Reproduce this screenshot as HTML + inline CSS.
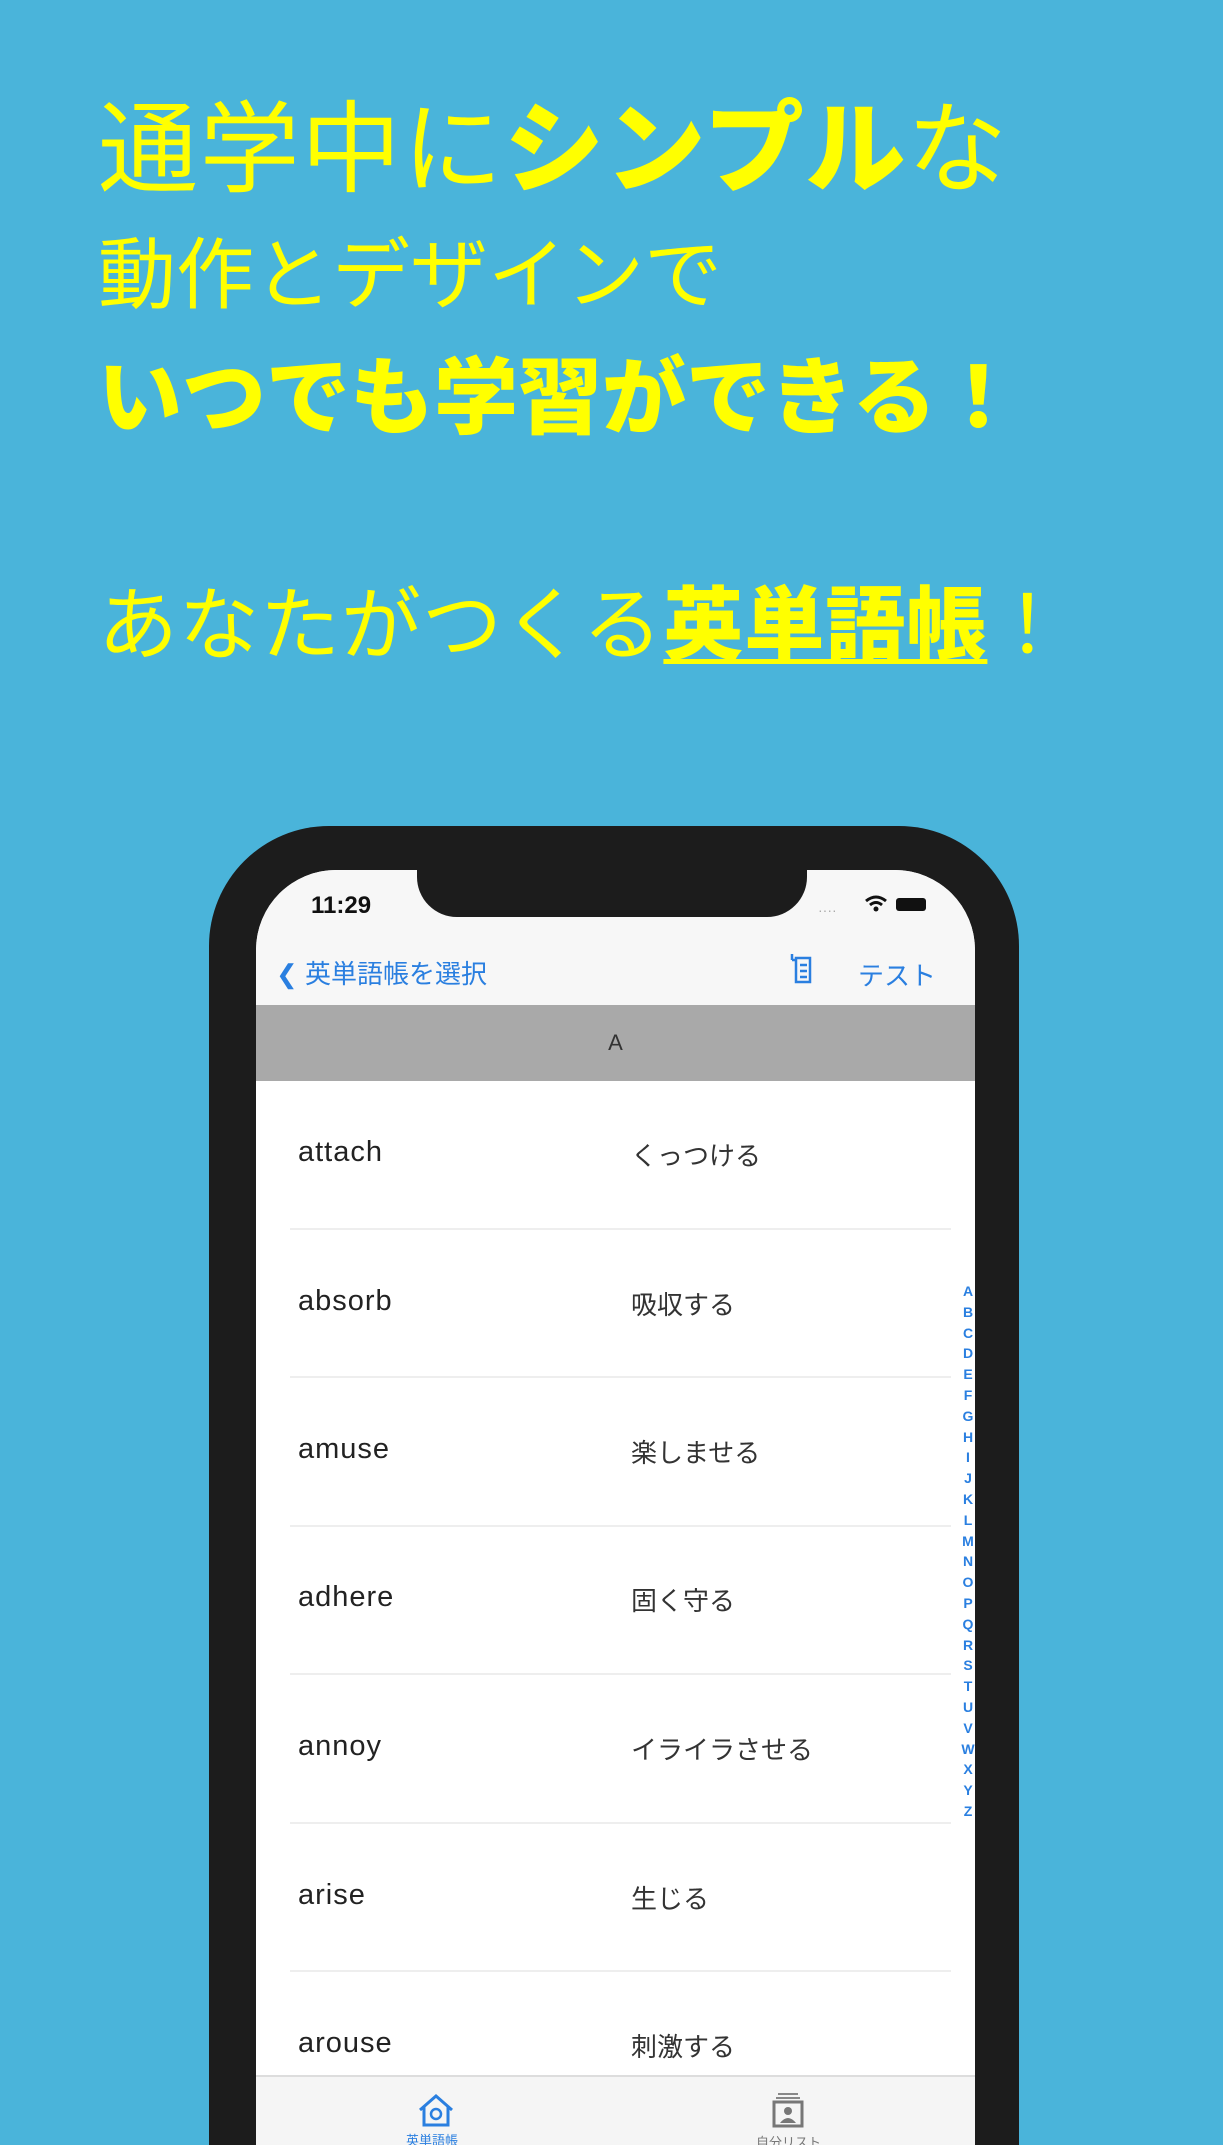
<!DOCTYPE html>
<html style="width:1223px;height:2145px;overflow:hidden"><head><meta charset="utf-8"><style>
*{margin:0;padding:0;box-sizing:border-box}
body{width:1223px;height:2145px;overflow:hidden;background:#4ab4da;position:relative;font-family:"Liberation Sans","Noto Sans CJK JP",sans-serif}
.h{position:absolute;left:98px;color:#ffff00;font-family:"Liberation Sans","Noto Sans CJK JP",sans-serif;white-space:nowrap;line-height:1}
b{font-weight:900}
.phone{position:absolute;left:209px;top:826px;width:810px;height:1319px;background:#1c1c1c;border-radius:120px 120px 0 0}
.screen{position:absolute;left:256px;top:870px;width:719px;height:1275px;background:#fff;border-radius:80px 80px 0 0;overflow:hidden}
.notch{position:absolute;left:161px;top:-5px;width:390px;height:52px;background:#1c1c1c;border-radius:0 0 40px 40px}
.abs{position:absolute}
.row{position:absolute;left:42px;font-size:29px;letter-spacing:1px;color:#222}
.jp{position:absolute;left:375px;font-size:26px;color:#333}
.sep{position:absolute;left:34px;width:661px;height:2px;background:#eee}
.idx{position:absolute;left:703px;top:411px;width:18px;font-size:14px;line-height:20.8px;color:#2a7fe0;font-weight:bold;text-align:center}
</style></head><body>
<div class="h" style="top:100px;font-size:100px;letter-spacing:1.5px">通学中に<b>シンプル</b>な</div>
<div class="h" style="top:236px;font-size:78px;letter-spacing:0">動作とデザインで</div>
<div class="h" style="top:356px;font-size:84px;letter-spacing:0"><b>いつでも学習ができる！</b></div>
<div class="h" style="top:586px;font-size:80px;letter-spacing:1px">あなたがつくる<b style="text-decoration:underline;text-decoration-thickness:5px;text-underline-offset:6px">英単語帳</b>！</div>
<div class="phone"></div>
<div class="screen">
<div class="abs" style="left:0;top:0;width:719px;height:135px;background:#f7f7f7"></div>
<div class="notch"></div>
<div class="abs" style="left:55px;top:22px;font-size:24px;font-weight:bold;color:#111">11:29</div>
<div class="abs" style="left:562px;top:32px;font-size:14px;color:#aaa">····</div>
<svg class="abs" style="left:608px;top:24px" width="70" height="20"><path d="M2 7Q12 -1 22 7M6 11Q12 6 18 11" stroke="#111" stroke-width="3" fill="none"/><circle cx="12" cy="15" r="2.5" fill="#111"/><rect x="32" y="4" width="30" height="13" rx="3" fill="#111"/></svg>
<div class="abs" style="left:20px;top:84px;font-size:26px;color:#2a7fe0">❮ 英単語帳を選択</div>
<svg class="abs" style="left:528px;top:82px" width="32" height="34"><path d="M8 2v6M8 8h4M12 6h14v24H12zM16 13h7M16 19h7M16 25h7" stroke="#2a7fe0" stroke-width="2.5" fill="none"/></svg>
<div class="abs" style="left:602px;top:86px;font-size:26px;color:#2a7fe0">テスト</div>
<div class="abs" style="left:0;top:135px;width:719px;height:76px;background:#a9a9a9;text-align:center;line-height:76px;font-size:22px;color:#333">A</div>
<div class="row" style="top:266px">attach</div><div class="jp" style="top:266px">くっつける</div>
<div class="sep" style="top:358px"></div>
<div class="row" style="top:415px">absorb</div><div class="jp" style="top:415px">吸収する</div>
<div class="sep" style="top:506px"></div>
<div class="row" style="top:563px">amuse</div><div class="jp" style="top:563px">楽しませる</div>
<div class="sep" style="top:655px"></div>
<div class="row" style="top:711px">adhere</div><div class="jp" style="top:711px">固く守る</div>
<div class="sep" style="top:803px"></div>
<div class="row" style="top:860px">annoy</div><div class="jp" style="top:860px">イライラさせる</div>
<div class="sep" style="top:952px"></div>
<div class="row" style="top:1009px">arise</div><div class="jp" style="top:1009px">生じる</div>
<div class="sep" style="top:1100px"></div>
<div class="row" style="top:1157px">arouse</div><div class="jp" style="top:1157px">刺激する</div>
<div class="idx">A<br>B<br>C<br>D<br>E<br>F<br>G<br>H<br>I<br>J<br>K<br>L<br>M<br>N<br>O<br>P<br>Q<br>R<br>S<br>T<br>U<br>V<br>W<br>X<br>Y<br>Z</div>
<div class="abs" style="left:0;top:1205px;width:719px;height:70px;background:#f5f5f5;border-top:2px solid #ddd"></div>
<svg class="abs" style="left:160px;top:1222px" width="40" height="36"><path d="M4 18L20 4L36 18M8 15v18h24V15" stroke="#2a7fe0" stroke-width="3" fill="none"/><circle cx="20" cy="22" r="5" stroke="#2a7fe0" stroke-width="2.5" fill="none"/></svg>
<div class="abs" style="left:150px;top:1260px;font-size:13px;color:#2a7fe0">英単語帳</div>
<svg class="abs" style="left:512px;top:1222px" width="40" height="36"><path d="M10 2h20M8 6h24" stroke="#888" stroke-width="2"/><rect x="6" y="10" width="28" height="24" stroke="#777" stroke-width="3" fill="none"/><circle cx="20" cy="19" r="4" fill="#777"/><path d="M12 31q8-10 16 0" fill="#777"/></svg>
<div class="abs" style="left:500px;top:1262px;font-size:13px;color:#777">自分リスト</div>
</div>
</body></html>
